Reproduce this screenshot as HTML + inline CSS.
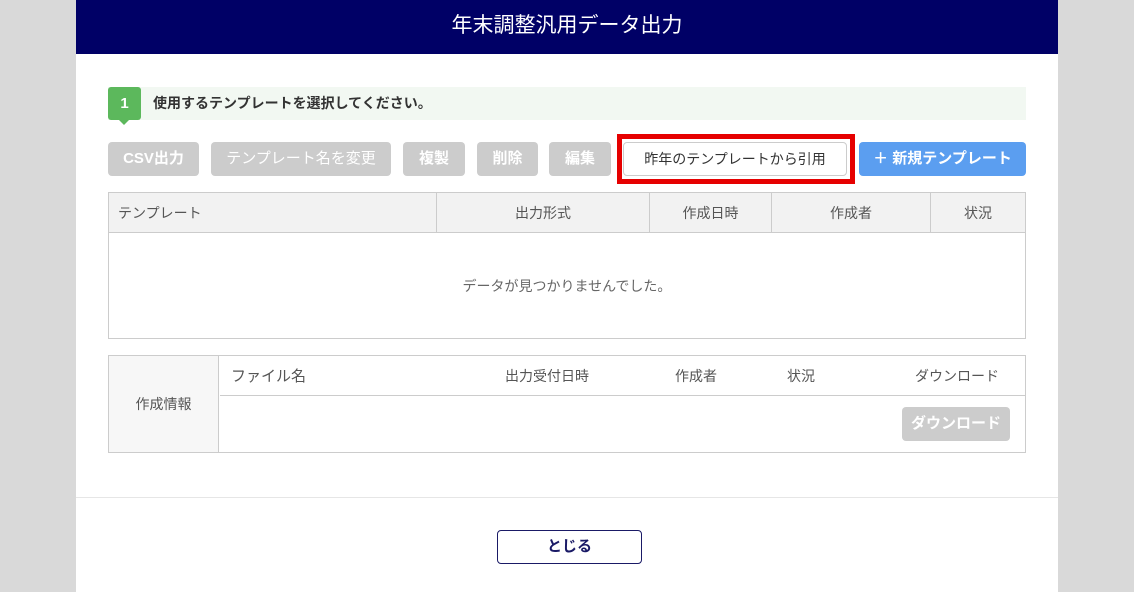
<!DOCTYPE html>
<html><head><meta charset="utf-8"><style>
*{box-sizing:border-box;margin:0;padding:0}
body{width:1134px;height:592px;background:#d9d9d9;font-family:"Liberation Sans","Noto Sans CJK JP",sans-serif;position:relative;overflow:hidden;color:#333}
.a{position:absolute}
.panel{left:76px;top:0;width:982px;height:592px;background:#fff}
.hdr{left:76px;top:0;width:982px;height:54px;background:#000066;color:#fff;font-size:21px;text-align:center;line-height:52px}
.btn{position:absolute;top:142px;height:34px;border-radius:4px;background:#cccccc;color:#fff;font-weight:bold;font-size:15px;text-align:center;line-height:34px}
.c{display:flex;align-items:center;justify-content:center;font-size:14px;color:#555}
</style></head><body>
<div class="a panel"></div>
<div class="a hdr">年末調整汎用データ出力</div>
<div class="a" style="left:108px;top:87px;width:918px;height:33px;background:#f2f8f2"></div>
<div class="a" style="left:108px;top:87px;width:33px;height:33px;background:#5cb85c;border-radius:3px;color:#fff;font-weight:bold;font-size:15px;text-align:center;line-height:33px">1</div>
<div class="a" style="left:119px;top:120px;width:0;height:0;border-left:5px solid transparent;border-right:5px solid transparent;border-top:5px solid #5cb85c"></div>
<div class="a" style="left:153px;top:87px;line-height:33px;font-size:14px;font-weight:bold;color:#333">使用するテンプレートを選択してください。</div>
<div class="btn" style="left:108px;width:91px">CSV出力</div>
<div class="btn" style="left:211px;width:180px;font-weight:normal">テンプレート名を変更</div>
<div class="btn" style="left:403px;width:62px">複製</div>
<div class="btn" style="left:477px;width:61px">削除</div>
<div class="btn" style="left:549px;width:62px">編集</div>
<div class="a" style="left:617px;top:134px;width:238px;height:50px;border:5px solid #e60000"></div>
<div class="a" style="left:623px;top:142px;width:224px;height:34px;border:1px solid #ccc;border-radius:4px;background:#fff;text-align:center;line-height:32px;font-size:14px;color:#333">昨年のテンプレートから引用</div>
<div class="btn" style="left:859px;width:167px;background:#5b9ef0">＋ 新規テンプレート</div>
<div class="a" style="left:108px;top:192px;width:918px;height:147px;border:1px solid #ccc"></div>
<div class="a" style="left:109px;top:193px;width:916px;height:40px;background:#f2f2f2;border-bottom:1px solid #ccc"></div>
<div class="a c" style="left:118px;top:193px;height:40px;justify-content:flex-start">テンプレート</div>
<div class="a" style="left:436px;top:193px;width:1px;height:40px;background:#ccc"></div>
<div class="a c" style="left:437px;top:193px;width:212px;height:40px">出力形式</div>
<div class="a" style="left:649px;top:193px;width:1px;height:40px;background:#ccc"></div>
<div class="a c" style="left:650px;top:193px;width:121px;height:40px">作成日時</div>
<div class="a" style="left:771px;top:193px;width:1px;height:40px;background:#ccc"></div>
<div class="a c" style="left:772px;top:193px;width:158px;height:40px">作成者</div>
<div class="a" style="left:930px;top:193px;width:1px;height:40px;background:#ccc"></div>
<div class="a c" style="left:931px;top:193px;width:94px;height:40px">状況</div>
<div class="a c" style="left:109px;top:234px;width:916px;height:104px;color:#666">データが見つかりませんでした。</div>
<div class="a" style="left:108px;top:355px;width:918px;height:98px;border:1px solid #ccc"></div>
<div class="a c" style="left:109px;top:356px;width:110px;height:96px;background:#f7f7f7;border-right:1px solid #ccc">作成情報</div>
<div class="a" style="left:220px;top:395px;width:805px;height:1px;background:#ccc"></div>
<div class="a c" style="left:231px;top:356px;height:39px;font-size:15px">ファイル名</div>
<div class="a c" style="left:505px;top:356px;height:39px">出力受付日時</div>
<div class="a c" style="left:675px;top:356px;height:39px">作成者</div>
<div class="a c" style="left:787px;top:356px;height:39px">状況</div>
<div class="a c" style="left:915px;top:356px;height:39px">ダウンロード</div>
<div class="a" style="left:902px;top:407px;width:108px;height:34px;border-radius:4px;background:#ccc;color:#fff;font-weight:bold;font-size:15px;text-align:center;line-height:34px">ダウンロード</div>
<div class="a" style="left:76px;top:497px;width:982px;height:1px;background:#e6e6e6"></div>
<div class="a" style="left:497px;top:530px;width:145px;height:34px;border:1px solid #1a1a66;border-radius:4px;text-align:center;line-height:32px;font-size:15px;font-weight:bold;color:#1a1a66">とじる</div>
</body></html>
